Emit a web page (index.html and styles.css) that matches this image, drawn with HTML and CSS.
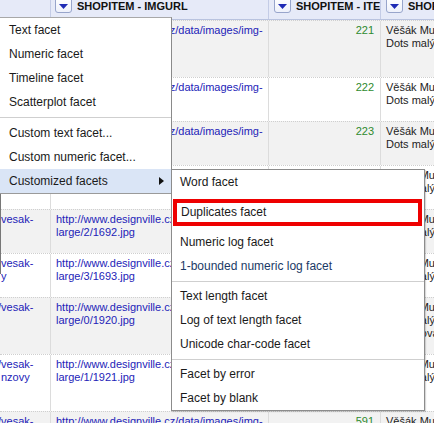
FILE: index.html
```html
<!DOCTYPE html>
<html>
<head>
<meta charset="utf-8">
<link rel="stylesheet" href="styles.css">
</head>
<body>
<div class="table">
  <div class="head">
    <div class="th"></div>
    <div class="th th2"><span class="dd"><svg width="9" height="5" viewBox="0 0 9 5"><polygon points="0,0 9,0 4.5,5" fill="#1f2bb5"/></svg></span><span class="hname">SHOPITEM - IMGURL</span></div>
    <div class="th"><span class="dd"><svg width="9" height="5" viewBox="0 0 9 5"><polygon points="0,0 9,0 4.5,5" fill="#1f2bb5"/></svg></span><span class="hname">SHOPITEM - ITEM_ID</span></div>
    <div class="th"><span class="dd"><svg width="9" height="5" viewBox="0 0 9 5"><polygon points="0,0 9,0 4.5,5" fill="#1f2bb5"/></svg></span><span class="hname">SHOPITEM - PRODUCTNAME</span></div>
  </div>

  <div class="row odd">
    <div class="c c1 link">vesak-<br>muuto<br>dots</div>
    <div class="c c2 link">http://www.designville.cz/data/images/img-<br>large/9/1689.jpg</div>
    <div class="c c3 num">221</div>
    <div class="c c4">Věšák Muuto<br>Dots malý</div>
  </div>
  <div class="row">
    <div class="c c1 link">vesak-<br>dots</div>
    <div class="c c2 link">http://www.designville.cz/data/images/img-<br>large/0/1690.jpg</div>
    <div class="c c3 num">222</div>
    <div class="c c4">Věšák Muuto<br>Dots malý</div>
  </div>
  <div class="row odd">
    <div class="c c1 link">vesak-<br>dots</div>
    <div class="c c2 link">http://www.designville.cz/data/images/img-<br>large/1/1691.jpg</div>
    <div class="c c3 num">223</div>
    <div class="c c4">Věšák Muuto<br>Dots malý</div>
  </div>
  <div class="row">
    <div class="c c1 link">vesak-<br>dots</div>
    <div class="c c2 link">http://www.designville.cz/data/images/img-<br>large/1/1691.jpg</div>
    <div class="c c3 num">224</div>
    <div class="c c4">Věšák Muuto<br>Dots malý</div>
  </div>
  <div class="row odd">
    <div class="c c1 link">vesak-</div>
    <div class="c c2 link">http://www.designville.cz/data/images/img-<br>large/2/1692.jpg</div>
    <div class="c c3 num">225</div>
    <div class="c c4">Věšák Muuto<br>Dots malý</div>
  </div>
  <div class="row">
    <div class="c c1 link">vesak-<br>y</div>
    <div class="c c2 link">http://www.designville.cz/data/images/img-<br>large/3/1693.jpg</div>
    <div class="c c3 num">226</div>
    <div class="c c4">Věšák Muuto<br>Dots malý</div>
  </div>
  <div class="row odd">
    <div class="c c1 link shift">/vesak-</div>
    <div class="c c2 link">http://www.designville.cz/data/images/img-<br>large/0/1920.jpg</div>
    <div class="c c3 num">589</div>
    <div class="c c4">Věšák Muuto<br>Dots malý<br>Bronz, ovál</div>
  </div>
  <div class="row">
    <div class="c c1 link shift">/vesak-<br>nzovy</div>
    <div class="c c2 link">http://www.designville.cz/data/images/img-<br>large/1/1921.jpg</div>
    <div class="c c3 num">590</div>
    <div class="c c4">Věšák Muuto<br>Dots malý<br>šedý</div>
  </div>
  <div class="row odd">
    <div class="c c1 link shift">/vesak-</div>
    <div class="c c2 link">http://www.designville.cz/data/images/img-<br>large/2/1922.jpg</div>
    <div class="c c3 num">591</div>
    <div class="c c4">Věšák Muuto<br>Dots malý</div>
  </div>
</div>

<div class="edge"></div>

<div class="menu main-menu">
  <div class="item">Text facet</div>
  <div class="item">Numeric facet</div>
  <div class="item">Timeline facet</div>
  <div class="item">Scatterplot facet</div>
  <div class="sep"></div>
  <div class="item">Custom text facet...</div>
  <div class="item">Custom numeric facet...</div>
  <div class="item active">Customized facets<svg class="arrow" width="5" height="8" viewBox="0 0 5 8"><polygon points="0,0 5,4 0,8" fill="#111"/></svg></div>
</div>

<div class="menu sub-menu">
  <div class="item">Word facet</div>
  <div class="item marked">Duplicates facet</div>
  <div class="item">Numeric log facet</div>
  <div class="item bounded">1-bounded numeric log facet</div>
  <div class="sep"></div>
  <div class="item">Text length facet</div>
  <div class="item">Log of text length facet</div>
  <div class="item">Unicode char-code facet</div>
  <div class="sep"></div>
  <div class="item">Facet by error</div>
  <div class="item">Facet by blank</div>
</div>
</body>
</html>
```

FILE: styles.css
```css
* { box-sizing: border-box; }

html, body {
  margin: 0;
  padding: 0;
  width: 434px;
  height: 423px;
  overflow: hidden;
  background: #fff;
  font-family: "Liberation Sans", Arial, sans-serif;
}

.table {
  width: 640px;
}

.head {
  display: grid;
  grid-template-columns: 51px 218px 112px 259px;
  height: 20px;
  background: #e6eaf8;
  border-bottom: 1px solid #b9c3df;
}

.th {
  position: relative;
  border-right: 1px solid #c4cce6;
  display: flex;
  align-items: flex-start;
  padding-left: 5px;
  white-space: nowrap;
  overflow: hidden;
}

.th2 { padding-left: 4px; }

.dd {
  width: 17px;
  height: 16px;
  margin-top: -3px;
  border: 1px solid #98a5cb;
  border-radius: 0 0 3px 3px;
  background: linear-gradient(#ffffff, #eef1fb);
  display: flex;
  align-items: center;
  justify-content: center;
  padding-top: 3px;
  flex: none;
}

.dd svg { display: block; }

.hname {
  margin-left: 5px;
  font-size: 11px;
  font-weight: bold;
  line-height: 13px;
  color: #111;
}

.row {
  display: grid;
  grid-template-columns: 51px 218px 112px 259px;
  border-top: 1px dotted #cfcfcf;
  background: #fff;
}

.row.odd { background: #f2f2f2; }

.c {
  padding: 3px 5px 14px 5px;
  font-size: 11px;
  line-height: 13px;
  white-space: nowrap;
  overflow: hidden;
  border-right: 1px solid #dcdcdc;
  color: #222;
}

.c1 { padding-left: 1px; }
.c1.shift { text-indent: -3px; }
.c1.shift br + * { text-indent: 0; }

.link { color: #2323b8; }

.num {
  text-align: right;
  padding-right: 6px;
  color: #2e8b2e;
}

.edge {
  position: absolute;
  left: 0;
  top: 194px;
  width: 1px;
  height: 80px;
  background: #777;
}

.menu {
  position: absolute;
  background: #fff;
  border: 1px solid #a8a8a8;
  font-size: 12px;
  color: #1a1a1a;
}

.main-menu {
  left: -1px;
  top: 17px;
  width: 173px;
  border-right-color: #8a8a8a;
  border-bottom-color: #9a9a9a;
}

.sub-menu {
  left: 171px;
  top: 169px;
  width: 254px;
  border-color: #8c8c8c;
  box-shadow: 1px 1px 1px rgba(0, 0, 0, 0.15);
}

.item {
  height: 24px;
  line-height: 24px;
  padding-left: 9px;
  white-space: nowrap;
  position: relative;
}

.sub-menu .item { padding-left: 8px; }

.item.active { background: #dae5f6; }

.arrow {
  position: absolute;
  left: 159px;
  top: 8px;
}

.sep {
  height: 1px;
  background: #cfcfcf;
  margin: 3px 0 3px 0;
}

.sub-menu .sep { margin: 3px 0 2px 0; }

.item.marked {
  height: 27px;
  line-height: 19px;
  margin: 5px 2px 4px 1px;
  border: 4px solid #ee0000;
  padding-left: 4px;
}

.item.bounded { color: #1b3a66; }
```
